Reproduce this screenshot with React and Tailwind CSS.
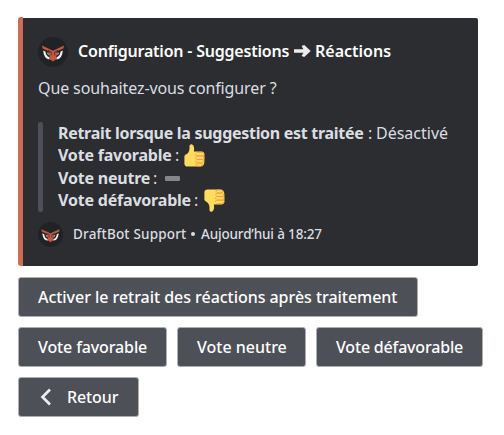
import React from "react";

function Owl({ className }) {
  return (
    <svg viewBox="0 0 30 30" className={className}>
      <circle cx="15" cy="15" r="15" fill="#202226" />
      <path d="M5.2 13.4L7.4 14.6Q8 19.2 11.6 20.4V22.6Q5.6 21.4 5.2 13.4ZM9.2 15.4L10.8 15.8L11.4 18.6Q9.4 17.6 9.2 15.4Z" fill="#f2f2f2" />
      <path d="M24.8 13.4L22.6 14.6Q22 19.2 18.4 20.4V22.6Q24.4 21.4 24.8 13.4ZM20.8 15.4L19.2 15.8L18.6 18.6Q20.6 17.6 20.8 15.4Z" fill="#f2f2f2" />
      <path d="M4 8.6L12.4 12.4L15 13.8L17.6 12.4L26 8.6L25.4 11.4L18.6 14.6V16H20.4L19.6 18H18.4V22L15 24.4L11.6 22V18H10.4L9.6 16H11.4V14.6L4.6 11.4Z" fill="#c05a42" />
      <path d="M10 13.4L13.3 15.2V18.5M20 13.4L16.7 15.2V18.5" stroke="#42261f" strokeWidth=".8" fill="none" />
    </svg>
  );
}

function Thumb({ className }) {
  return (
    <svg viewBox="0 0 21 23" className={className}>
      <path d="M.4 12.4Q.4 10.8 2.4 10.2Q5.2 8.7 5.5 4.7V1.8Q5.9.1 7.5.3Q9.9.9 10.1 4.5Q10.2 6.3 9.8 7.6H18Q20.4 7.8 20.4 10.2V17.5Q20.2 22.6 16.4 22.6H3.5Q.4 22.6.4 19.5Z" fill="#ffdc5d" />
      <path d="M12.6 8.4H18Q20.3 8.5 20 10.4Q19.8 11.9 18 11.9H12.9Q11.4 11.7 11.5 10M12.6 11.9H18.4Q20.5 12.2 20.1 14Q19.8 15.4 18 15.5H12.7Q11.2 15 11.7 12.9M12.7 15.5H17.8Q20 15.8 19.4 17.7Q19 19 17.4 19H12.8Q11.2 18.2 12 16.3M12.8 19H17Q18.8 19.3 18.2 21Q17.9 22.2 16.4 22.2H13Q11.4 21.4 12 19.8" fill="none" stroke="#ef9645" strokeWidth=".75" />
    </svg>
  );
}

function Button({ className, children }) {
  return (
    <button className={`flex h-10 items-center rounded-[3px] border border-[#acaeb2] bg-[#4e5058] pl-[19px] text-left font-medium whitespace-nowrap text-white ${className}`}>
      {children}
    </button>
  );
}

export default function App() {
  return (
    <main className="h-[435px] w-[504px] overflow-hidden bg-white pt-[17px] pl-[18px] font-['Noto_Sans','Open_Sans',sans-serif] text-[16px] leading-[22px]">
      <section className="flex h-[249px] w-[460px]">
        <div className="w-[5px] rounded-l-[3px] bg-[#cd6d55]" />
        <div className="mt-px w-[455px] rounded-r-[2px] bg-[#2b2d31] pt-[19px] pl-[15px] text-[#dbdee1]">
          <header className="flex h-[30px] items-center whitespace-nowrap">
            <Owl className="size-[30px]" />
            <h1 className="ml-[10px] flex items-center pb-0.5 font-semibold text-white">
              <span className="w-[212px] tracking-[-0.21px]">Configuration - Suggestions</span>
              <svg viewBox="0 0 17 12" className="mr-1 ml-1 h-3 w-[17px]">
                <path d="M0 4.3H9.4L7.6 1L10.2 0L16.7 6L10.2 12L7.6 11L9.4 7.7H0Z" fill="#ececed" />
              </svg>
              <span>Réactions</span>
            </h1>
          </header>
          <p className="mt-[10px] h-[23px] tracking-[-0.12px]">Que souhaitez-vous configurer ?</p>
          <blockquote className="mt-[22px] flex h-[90px]">
            <div className="w-[5px] rounded-full bg-[#4e5058]" />
            <div className="ml-[15px] flex flex-col whitespace-nowrap">
              <div className="flex h-[22px] items-center"><b className="w-[306px] tracking-[-0.29px]">Retrait lorsque la suggestion est traitée</b><span className="ml-1 w-2">:</span><span>Désactivé</span></div>
              <div className="flex h-[23px] items-center"><b className="w-[113px] pb-0.5 tracking-[-0.21px]">Vote favorable</b><span className="ml-1 w-[9px] pb-0.5">:</span><Thumb className="h-[23px] w-[21px]" /></div>
              <div className="flex h-[22px] items-center"><b className="w-[91px] tracking-[-0.2px]">Vote neutre</b><span className="ml-1 w-3">:</span><i className="h-[5px] w-[15px] rounded-[1px] bg-[#85868a]" /></div>
              <div className="flex h-[23px] items-center"><b className="w-[132px] pb-0.5 tracking-[-0.2px]">Vote défavorable</b><span className="ml-1 w-[10px] pb-0.5">:</span><Thumb className="h-[23px] w-[21px] -scale-y-100" /></div>
            </div>
          </blockquote>
          <footer className="mt-[10px] flex h-[25px] items-center text-[13.5px] font-medium whitespace-nowrap">
            <Owl className="size-[25px]" />
            <span className="ml-[10px] w-[113px] pb-0.5 tracking-[0.18px]">DraftBot Support</span>
            <i className="mx-[5px] mb-0.5 size-1 rounded-full bg-[#dbdee1]" />
            <span className="ml-px pb-0.5 tracking-[-0.16px]">Aujourd’hui à 18:27</span>
          </footer>
        </div>
      </section>
      <nav className="mt-[11px] flex flex-col gap-[10px]">
        <Button className="w-[400px]"><span className="tracking-[-0.04px]">Activer le retrait des réactions après traitement</span></Button>
        <div className="flex">
          <Button className="w-[149px]"><span className="tracking-[-0.12px]">Vote favorable</span></Button>
          <Button className="ml-[10px] w-[129px]"><span>Vote neutre</span></Button>
          <Button className="ml-[10px] w-[167px]"><span className="tracking-[-0.18px]">Vote défavorable</span></Button>
        </div>
        <Button className="w-[121px]">
          <svg viewBox="0 0 12 18" className="ml-0.5 h-[18px] w-3"><path d="M10 1.5L2.5 9L10 16.5" stroke="#ededee" strokeWidth="2.7" fill="none" /></svg>
          <span className="ml-[15px] tracking-[-0.1px]">Retour</span>
        </Button>
      </nav>
    </main>
  );
}
